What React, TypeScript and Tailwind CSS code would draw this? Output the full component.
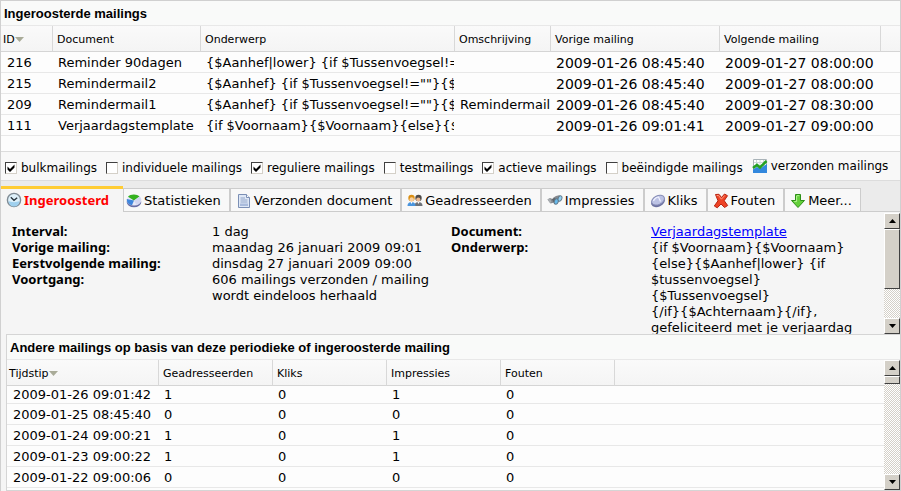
import type { ReactNode } from "react";

const schedule = [
  { id: "216", doc: "Reminder 90dagen", subject: '{$Aanhef|lower} {if $Tussenvoegsel!="', note: "", prev: "2009-01-26 08:45:40", next: "2009-01-27 08:00:00" },
  { id: "215", doc: "Remindermail2", subject: '{$Aanhef} {if $Tussenvoegsel!=""}{$T', note: "", prev: "2009-01-26 08:45:40", next: "2009-01-27 08:00:00" },
  { id: "209", doc: "Remindermail1", subject: '{$Aanhef} {if $Tussenvoegsel!=""}{$T', note: "Remindermail n", prev: "2009-01-26 08:45:40", next: "2009-01-27 08:30:00" },
  { id: "111", doc: "Verjaardagstemplate", subject: "{if $Voornaam}{$Voornaam}{else}{$A", note: "", prev: "2009-01-26 09:01:41", next: "2009-01-27 09:00:00" },
];

const filters = [
  { id: "bulk", label: "bulkmailings", checked: true },
  { id: "individual", label: "individuele mailings", checked: false },
  { id: "regular", label: "reguliere mailings", checked: true },
  { id: "test", label: "testmailings", checked: false },
  { id: "active", label: "actieve mailings", checked: true },
  { id: "ended", label: "beëindigde mailings", checked: false },
];

const history = [
  ["2009-01-26 09:01:42", "1", "0", "1", "0"],
  ["2009-01-25 08:45:40", "0", "0", "0", "0"],
  ["2009-01-24 09:00:21", "1", "0", "1", "0"],
  ["2009-01-23 09:00:22", "1", "0", "1", "0"],
  ["2009-01-22 09:00:06", "0", "0", "0", "0"],
];

function Svg({ children }: { children: ReactNode }) {
  return (
    <svg viewBox="0 0 16 16" className="h-4 w-4 shrink-0" aria-hidden="true">
      {children}
    </svg>
  );
}

const ClockIcon = () => (
  <Svg>
    <circle cx="8" cy="8" r="6.6" fill="#dff1fa" stroke="#7f8b94" strokeWidth="1.4" />
    <path d="M2.500 9a5.500 5.500 0 0 0 11 0c-3 1.500-8 1.500-11 0z" fill="#9fd0ee" />
    <path d="M4.800 5.200 8 8.300l3.200-2.600" fill="none" stroke="#26323b" strokeWidth="1.300" />
  </Svg>
);

const PieIcon = () => (
  <Svg>
    <ellipse cx="8" cy="9" rx="7.300" ry="5.300" fill="#6a6fa6" />
    <ellipse cx="8" cy="7" rx="7.300" ry="5.500" fill="#e6e8f8" />
    <path d="M8 7.500.9 6A7.300 5.500 0 0 0 6 12.300z" fill="#3f86dd" />
    <path d="M8 7.500 2 3.800C4 .8 11 .5 13.500 3.500z" fill="#35b21f" />
    <path d="m8 7.500 5.500-4c3.200 2.400 2 7-3 8.600z" fill="#d3d6f0" />
  </Svg>
);

const PageIcon = () => (
  <Svg>
    <path d="M2.500 1.500h8l3 3v10h-11z" fill="#dfe8f6" stroke="#7b8fb5" />
    <path d="M10.500 1.500v3h3" fill="#fff" stroke="#7b8fb5" />
    <path d="M4.500 5h4.500M4.500 7h7M4.500 9h7" stroke="#90a4c8" />
    <path d="M4 10.500h8V13H4z" fill="#a9bbdc" />
  </Svg>
);

const UsersIcon = () => (
  <Svg>
    <circle cx="11.500" cy="5" r="3.200" fill="#4d4a48" />
    <circle cx="11.300" cy="6.500" r="2.100" fill="#e9b690" />
    <path d="M7.500 13c0-3 1.600-4 4-4s4 1 4 4z" fill="#6d7279" />
    <path d="m10.500 9 1 2 1-2z" fill="#fff" />
    <circle cx="4.500" cy="5" r="3.200" fill="#d98e12" />
    <circle cx="4.700" cy="6.400" r="2.200" fill="#f7cd9d" />
    <path d="M.5 13c0-3 1.600-4 4-4s4 1 4 4z" fill="#4b95dd" />
    <path d="m3.500 9 1 2 1-2z" fill="#fff" />
  </Svg>
);

const BinocularsIcon = () => (
  <Svg>
    <path d="M.5 6.500 3 5l2.500 1 1-1.500L9 3l3-.8 2 1L13 8l-4 1-5.500 1.500z" fill="#85898e" />
    <path d="M.5 6.500 3 5l1.500 4-1.500 1z" fill="#a9adb1" />
    <path d="m5 6 3-1 1.500 3-3 1.500z" fill="#5e646a" />
    <ellipse cx="9.300" cy="8.500" rx="2" ry="2.800" fill="#68bbec" stroke="#62798a" transform="rotate(20 9.300 8.500)" />
    <ellipse cx="13" cy="5.500" rx="1.800" ry="2.800" fill="#8fd2f5" stroke="#62798a" transform="rotate(20 13 5.500)" />
  </Svg>
);

const MouseIcon = () => (
  <Svg>
    <ellipse cx="8" cy="8.800" rx="7.200" ry="4.900" fill="#6c71a0" transform="rotate(-25 8 8.800)" />
    <ellipse cx="8" cy="7.200" rx="6.800" ry="4.400" fill="#bcc2e4" stroke="#858bb5" transform="rotate(-25 8 7.200)" />
    <path d="M3.500 8c.5-2 3-4 5.500-4M8.500 4l2 4.500" fill="none" stroke="#f0f2ff" strokeWidth="1.200" />
  </Svg>
);

const CrossIcon = () => (
  <Svg>
    <path d="M2.500 1.500 6 1.300l2.500 3.200 3-3.500 3 1.700-3.300 5 3.500 4.800-3.200 2L8 11l-3.700 3.800L1.300 13 5 7.800z" fill="#ee4427" stroke="#b92511" />
    <path d="m3.600 2.600 1.900-.2 2.900 3.800 3.300-3.700" fill="none" stroke="#ff9a7f" />
  </Svg>
);

const DownIcon = () => (
  <Svg>
    <path d="M5.500 1.500h5v6h4L8 14.500 1.500 7.500h4z" fill="#63cf3a" stroke="#2c8f17" />
    <path d="M6.800 2.700h2.500M6.600 3v5.600H4.300" fill="none" stroke="#b7f296" />
  </Svg>
);

const ChartIcon = () => (
  <Svg>
    <path d="M1.500 1.500h13v13h-13z" fill="#fff" stroke="#a9b3b8" />
    <path d="M4.500 2v9M8 2v9M11.500 2v9M2 4.500h12M2 7.500h12" stroke="#cfd6da" />
    <path d="M1 11.500 5 9l3 1.500L15 6v9H1z" fill="#3388dd" />
    <path d="m1 10 4-3 3 2.500L14.500 3" fill="none" stroke="#24a022" strokeWidth="2.600" />
  </Svg>
);

const tabs = [
  { label: "Statistieken", icon: <PieIcon /> },
  { label: "Verzonden document", icon: <PageIcon /> },
  { label: "Geadresseerden", icon: <UsersIcon /> },
  { label: "Impressies", icon: <BinocularsIcon /> },
  { label: "Kliks", icon: <MouseIcon /> },
  { label: "Fouten", icon: <CrossIcon /> },
  { label: "Meer...", icon: <DownIcon /> },
];

function SortMark() {
  return (
    <svg viewBox="0 0 9 5" className="inline-block h-[5px] w-[9px] align-middle" aria-hidden="true">
      <path d="M0 0h9L4.500 5z" fill="#a9ab98" />
    </svg>
  );
}

function Head({ children, sorted }: { children?: ReactNode; sorted?: boolean }) {
  return (
    <th
      className={
        "h-[26px] overflow-hidden whitespace-nowrap border-b border-[#d5d5d5] p-0 pt-0.5 text-left text-[11px] font-normal leading-4 " +
        (sorted ? "pl-0.5" : "border-l border-l-[#d8d8d8] pl-1")
      }
    >
      {children}
      {sorted && <SortMark />}
    </th>
  );
}

function Cell({ children, large }: { children?: ReactNode; large?: boolean }) {
  return (
    <td className={"overflow-hidden whitespace-nowrap border-b border-[#e8e8e8] p-0 pl-1.5 " + (large ? "text-sm leading-4" : "text-[13px] leading-4")}>
      {children}
    </td>
  );
}

function Term({ children }: { children: ReactNode }) {
  return <dt className="font-['Noto_Sans',Tahoma,sans-serif] font-bold leading-[14px]">{children}</dt>;
}

const bevel = "border border-t-white border-l-white border-r-[#404040] border-b-[#404040] bg-[#d4d0c8]";

function ScrollBar({ name, thumb }: { name: string; thumb: ReactNode }) {
  return (
    <div className="flex w-4 shrink-0 flex-col bg-[conic-gradient(#d4d0c8_25%,#fff_0_50%,#d4d0c8_0_75%,#fff_0)] bg-[length:2px_2px]">
      <button aria-label={name + " omhoog"} className={"flex h-4 w-4 items-center justify-center " + bevel}>
        <svg viewBox="0 0 7 4" className="h-1 w-[7px]"><path d="M0 4h7L3.500 0z" /></svg>
      </button>
      {thumb}
      <button aria-label={name + " omlaag"} className={"mt-auto flex h-4 w-4 items-center justify-center " + bevel}>
        <svg viewBox="0 0 7 4" className="h-1 w-[7px]"><path d="M0 0h7L3.500 4z" /></svg>
      </button>
    </div>
  );
}

export default function App() {
  return (
    <main className="border-x border-t border-[#d0d0d0] bg-[#f5f5f5] font-['DejaVu_Sans',Verdana,sans-serif] text-[13px] leading-4 text-black">
      <section className="bg-[#fdfdfd]">
        <h1 className="h-[25px] border-b border-[#e8e8e8] bg-[#f9faf9] pl-[3px] font-['Liberation_Sans',Arial,sans-serif] text-[13px] font-bold leading-[26px]">
          Ingeroosterde mailings
        </h1>
        <div className="min-h-[125px]">
          <table className="w-full table-fixed border-separate border-spacing-0">
            <colgroup>
              <col className="w-[51px]" />
              <col className="w-[148px]" />
              <col className="w-[254px]" />
              <col className="w-[96px]" />
              <col className="w-[169px]" />
              <col className="w-[161px]" />
              <col />
            </colgroup>
            <thead className="bg-linear-to-b from-[#fafafa] to-[#f4f4f4]">
              <tr>
                <Head sorted>ID</Head>
                <Head>Document</Head>
                <Head>Onderwerp</Head>
                <Head>Omschrijving</Head>
                <Head>Vorige mailing</Head>
                <Head>Volgende mailing</Head>
                <Head />
              </tr>
            </thead>
            <tbody>
              {schedule.map((m) => (
                <tr key={m.id} className="h-[21px] [&>td]:pt-0.5">
                  <Cell>{m.id}</Cell>
                  <Cell>{m.doc}</Cell>
                  <Cell>{m.subject}</Cell>
                  <Cell>{m.note}</Cell>
                  <Cell large>{m.prev}</Cell>
                  <Cell large>{m.next}</Cell>
                  <Cell />
                </tr>
              ))}
            </tbody>
          </table>
        </div>
        <div className="flex h-[30px] items-center whitespace-nowrap border-y border-[#dcdcdc] bg-[#f8f8f8] pl-1 pt-1 text-xs">
          {filters.map((f) => (
            <label key={f.id} htmlFor={f.id} className="mr-[9px] flex items-center gap-1">
              <span className="grid h-3 w-3">
                <input
                  id={f.id}
                  type="checkbox"
                  defaultChecked={f.checked}
                  className="peer col-start-1 row-start-1 h-3 w-3 appearance-none border border-b-[#d4d0c8] border-l-[#404040] border-r-[#d4d0c8] border-t-[#404040] bg-white"
                />
                <svg viewBox="0 0 12 12" className="pointer-events-none invisible col-start-1 row-start-1 h-3 w-3 peer-checked:visible" aria-hidden="true">
                  <path d="M2.500 4.500v3L5 10l4.500-4.500v-3L5 7z" />
                </svg>
              </span>
              {f.label}
            </label>
          ))}
          <a href="#verzonden" className="flex items-center gap-[3px] pb-1">
            <ChartIcon />
            verzonden mailings
          </a>
        </div>
      </section>

      <nav className="flex items-end whitespace-nowrap bg-[#ebebeb] pt-[5px]">
        <button className="flex h-[26px] items-center gap-0.5 border-t-[3px] border-[#fc3] bg-[#f5f5f5] pb-0.5 pl-[5px] pr-[14px] font-['Noto_Sans',Tahoma,sans-serif] font-bold text-[#f00]">
          <ClockIcon />
          Ingeroosterd
        </button>
        <div className="flex flex-1 border-b border-[#ccc]">
          {tabs.map((t) => (
            <button key={t.label} className="flex h-[23px] items-center gap-0.5 border-l-2 border-r-0 border-t border-[#ccc] bg-[#f8f8f8] pl-[5px] pr-2 pt-0.5 first:border-l first:pl-0.5 last:border-r">
              {t.icon}
              {t.label}
            </button>
          ))}
        </div>
      </nav>

      <section className="flex h-[122px] pt-px">
        <div className="flex flex-1 overflow-hidden pl-[11px] pt-[11px]">
          <dl className="grid w-[439px] grid-cols-[200px_1fr] content-start">
            <Term>Interval:</Term>
            <dd>1 dag</dd>
            <Term>Vorige mailing:</Term>
            <dd>maandag 26 januari 2009 09:01</dd>
            <Term>Eerstvolgende mailing:</Term>
            <dd>dinsdag 27 januari 2009 09:00</dd>
            <Term>Voortgang:</Term>
            <dd>606 mailings verzonden / mailing wordt eindeloos herhaald</dd>
          </dl>
          <dl className="grid flex-1 grid-cols-[200px_1fr] content-start">
            <Term>Document:</Term>
            <dd><a href="#document" className="text-[#00f] underline">Verjaardagstemplate</a></dd>
            <Term>Onderwerp:</Term>
            <dd>
              {"{if $Voornaam}{$Voornaam}"}<br />
              {"{else}{$Aanhef|lower} {if"}<br />
              {"$tussenvoegsel}"}<br />
              {"{$Tussenvoegsel}"}<br />
              {"{/if}{$Achternaam}{/if},"}<br />
              gefeliciteerd met je verjaardag
            </dd>
          </dl>
        </div>
        <ScrollBar name="Details" thumb={<div className={"h-[60px] " + bevel} />} />
      </section>

      <section className="ml-[5px] border-y border-l border-[#d5d5d5] bg-[#fdfdfd]">
        <h2 className="h-[25px] border-b border-[#e8e8e8] bg-[#f9faf9] pl-[3px] font-['Liberation_Sans',Arial,sans-serif] text-[13px] font-bold leading-[26px]">
          Andere mailings op basis van deze periodieke of ingeroosterde mailing
        </h2>
        <div className="flex">
          <div className="flex-1 pb-0.5">
            <table className="w-full table-fixed border-separate border-spacing-0">
              <colgroup>
                <col className="w-[151px]" />
                <col className="w-[114px]" />
                <col className="w-[114px]" />
                <col className="w-[114px]" />
                <col className="w-[114px]" />
                <col />
              </colgroup>
              <thead className="bg-linear-to-b from-[#fafafa] to-[#f4f4f4]">
                <tr>
                  <Head sorted>Tijdstip</Head>
                  <Head>Geadresseerden</Head>
                  <Head>Kliks</Head>
                  <Head>Impressies</Head>
                  <Head>Fouten</Head>
                  <Head />
                </tr>
              </thead>
              <tbody>
                {history.map((r, i) => (
                  <tr key={r[0]} className={i === 0 ? "h-[18px]" : "h-[21px] [&>td]:pt-0.5"}>
                    {r.map((v, c) => (
                      <Cell key={c}>{v}</Cell>
                    ))}
                    <Cell />
                  </tr>
                ))}
              </tbody>
            </table>
          </div>
          <ScrollBar name="Lijst" thumb={<div className={"h-2 " + bevel} />} />
        </div>
      </section>
    </main>
  );
}
